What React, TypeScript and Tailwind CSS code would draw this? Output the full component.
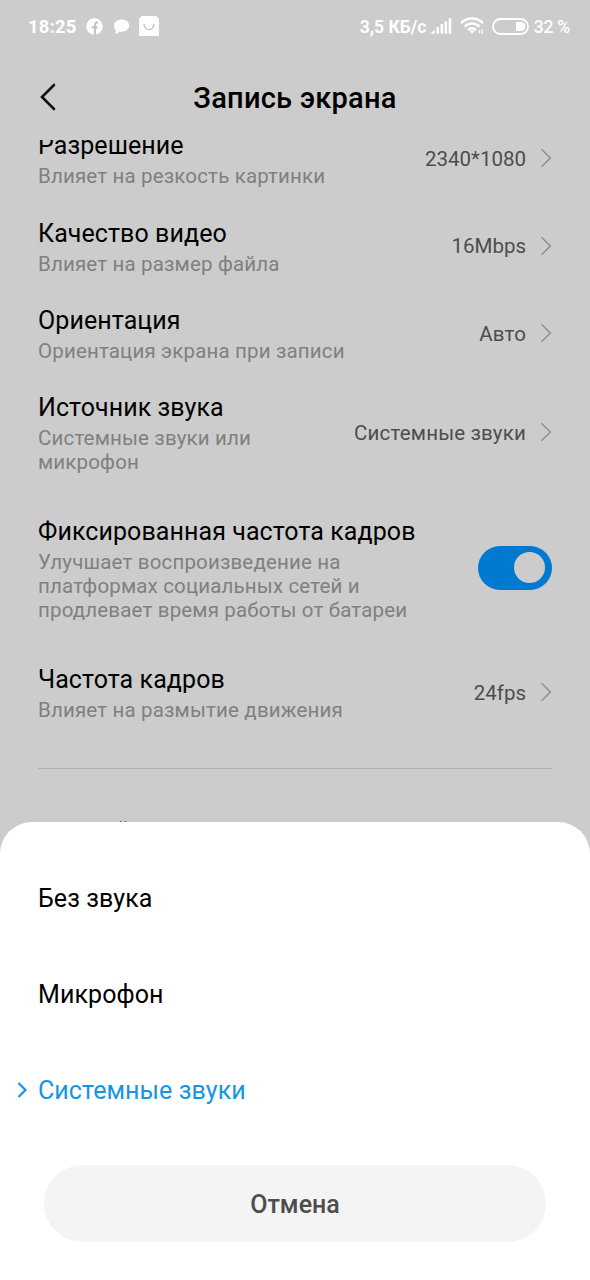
import clsx from 'clsx';

type Setting = {
    title: string;
    hint: string[];
    value?: string;
    height: string;
};

const settings: Setting[] = [
    { title: 'Разрешение', hint: ['Влияет на резкость картинки'], value: '2340*1080', height: 'h-[87.5px]' },
    { title: 'Качество видео', hint: ['Влияет на размер файла'], value: '16Mbps', height: 'h-[87.5px]' },
    { title: 'Ориентация', hint: ['Ориентация экрана при записи'], value: 'Авто', height: 'h-[87.5px]' },
    { title: 'Источник звука', hint: ['Системные звуки или', 'микрофон'], value: 'Системные звуки', height: 'h-[110.5px]' },
    {
        title: 'Фиксированная частота кадров',
        hint: ['Улучшает воспроизведение на', 'платформах социальных сетей и', 'продлевает время работы от батареи'],
        height: 'h-[160.5px]',
    },
    { title: 'Частота кадров', hint: ['Влияет на размытие движения'], value: '24fps', height: 'h-[88px]' },
];

const options = ['Без звука', 'Микрофон', 'Системные звуки'];

const StatusBar = () => (
    <div className="flex h-[54px] items-center justify-between pl-[28px] pr-[20px] text-white">
        <div className="flex items-center">
            <span className="w-[58px] pt-px text-[18.5px] font-bold tracking-[0.2px]">18:25</span>
            <svg width="17" height="17" viewBox="0 0 17 17" className="relative -top-px shrink-0">
                <circle cx="8.5" cy="8.5" r="8.3" fill="white" />
                <path d="M8.900 17V7.2c0-2 1-3 3.3-2.8M5.8 9.4h5.8" fill="none" stroke="#c4c4c4" strokeWidth="2.100" />
            </svg>
            <svg width="17" height="17" viewBox="0 0 17 17" className="relative -top-px ml-[10px] shrink-0">
                <path d="M8.7 1.5c4.4 0 7.5 2.6 7.5 6s-3.1 6.2-7.5 6.2c-.9 0-1.7 0-2.5-.3-1.3 1.5-3 2.3-4.5 2.2.8-1 1.2-2.2 1-3.5C1.500 11 1 9.300 1 7.600c0-3.500 3.300-6.100 7.700-6.100Z" fill="white" />
            </svg>
            <svg width="20" height="20" viewBox="0 0 20 20" className="relative -top-px ml-[9px] shrink-0">
                <path d="M2.500 0h15l2.500 3v17H0V3Z" fill="white" />
                <path d="M5 8c.5 3.500 2.300 5.500 5 5.500S14.500 11.500 15 8" fill="none" stroke="#bbb" strokeWidth="1.200" />
            </svg>
        </div>
        <div className="flex items-center">
            <span className="w-[69px] whitespace-nowrap text-[17.5px] font-bold">3,5 КБ/с</span>
            <svg width="23" height="18" viewBox="0 0 24 18" className="relative -top-px shrink-0" fill="white">
                <path d="M1 17l5-4v4ZM7.800 10h2.600v7H7.800ZM12.100 7h2.600v10h-2.600ZM16.300 4h2.600v13h-2.600ZM20.500 1H23.200v16h-2.700Z" />
            </svg>
            <svg width="24" height="20" viewBox="0 0 24 20" className="relative -top-px ml-[8px] shrink-0">
                <g fill="none" stroke="white" strokeWidth="2.500">
                    <path d="M1 7.200C7 1 17 1 23 7.200" />
                    <path d="M4.500 10.700c4.300-4.200 10.700-4.200 15 0" />
                    <path d="M8 14c2.300-2.200 5.700-2.200 8 0" />
                </g>
                <path d="M9.500 15.200c1.500-1.300 3.500-1.300 5 0L12 17.700Z" fill="white" />
                <path d="M19.500 14v3.500M22 13v5" stroke="white" strokeWidth="1.200" />
            </svg>
            <svg width="37" height="17" viewBox="0 0 37 17" className="relative -top-px ml-[8px] shrink-0">
                <rect x="1" y="1" width="35" height="15" rx="7.500" fill="none" stroke="white" strokeWidth="1.800" />
                <path d="M24 4h5a4.500 4.500 0 0 1 0 9h-5Z" fill="white" />
            </svg>
            <span className="ml-[5px] whitespace-nowrap text-[17.5px] font-medium tracking-[-0.2px]">32 %</span>
        </div>
    </div>
);

const Chevron = () => (
    <svg width="12" height="20" viewBox="0 0 12 20" className="relative -top-px shrink-0" fill="none">
        <path d="M1.500 1.200L10.300 10L1.500 18.800" stroke="#8f8f8f" strokeWidth="1.500" />
    </svg>
);

const Toggle = () => (
    <div className="flex h-[44px] w-[74px] shrink-0 items-center justify-end rounded-full bg-[#0079d0] pr-[7px]">
        <div className="size-[31px] rounded-full bg-[#ccc]" />
    </div>
);

const SettingRow = ({ title, hint, value, height }: Setting) => (
    <div className={clsx('flex shrink-0 items-center justify-between', height)}>
        <div className="whitespace-nowrap">
            <div className="text-[25px] leading-[36px] tracking-[0.08px] text-black">{title}</div>
            {hint.map((line) => (
                <div key={line} className="text-[20.5px] leading-[24px] tracking-[0.16px] text-[#808080]">
                    {line}
                </div>
            ))}
        </div>
        {value ? (
            <div className="flex items-center gap-[14px] pt-[2px]">
                <span
                    className={clsx(
                        'whitespace-nowrap text-[20.5px] text-[#4d4d4d]',
                        /\d/.test(value) ? 'tracking-normal' : 'tracking-[0.17px]',
                    )}
                >
                    {value}
                </span>
                <Chevron />
            </div>
        ) : (
            <Toggle />
        )}
    </div>
);

export default function App() {
    return (
        <div className="relative flex h-[1280px] w-[590px] flex-col overflow-hidden bg-[#ccc] font-['Roboto',sans-serif]">
            <StatusBar />
            <header className="relative flex h-[86px] shrink-0 items-center justify-center pt-[3px]">
                <svg width="18" height="28" viewBox="0 0 18 28" className="absolute left-[39px] top-[29px]" fill="none">
                    <path d="M15 2L3 14L15 26" stroke="#111" strokeWidth="2.600" strokeLinecap="round" />
                </svg>
                <h1 className="text-[29px] font-medium tracking-[0.24px] text-black">Запись экрана</h1>
            </header>
            <main className="flex flex-1 flex-col overflow-hidden px-[38px]">
                <div className="-mt-[25.5px] flex flex-col">
                    {settings.map((item) => (
                        <SettingRow key={item.title} {...item} />
                    ))}
                </div>
                <div className="mt-[31.5px] h-px shrink-0 bg-[#b0b0b0]" />
                <div className="mt-[44px] pl-[3px] text-[22px] lowercase tracking-[0.7px] text-[#666]">Настройки</div>
            </main>
            <section className="absolute inset-x-0 bottom-0 h-[458px] rounded-t-[32px] bg-white pt-[28px]">
                {options.map((option, i) => (
                    <div
                        key={option}
                        className={clsx(
                            'flex h-[96px] items-center text-[25px] tracking-[0.08px]',
                            i === 2 ? 'text-[#1495e7]' : 'text-black',
                        )}
                    >
                        <div className="flex w-[38px] shrink-0 pl-[17px]">
                            {i === 2 && (
                                <svg width="11" height="18" viewBox="0 0 11 18" fill="none">
                                    <path d="M1.500 2L8.500 9L1.500 16" stroke="currentColor" strokeWidth="2.200" />
                                </svg>
                            )}
                        </div>
                        <span className="pt-[2px]">{option}</span>
                    </div>
                ))}
                <button className="mx-[44px] mt-[27px] block h-[77px] w-[502px] rounded-full bg-[#f4f4f4] pt-[2px] text-[25px] font-medium text-[#4d4d4d]">
                    Отмена
                </button>
            </section>
        </div>
    );
}
